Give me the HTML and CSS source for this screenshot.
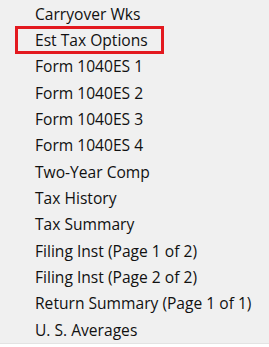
FILE: index.html
```html
<!DOCTYPE html>
<html lang="en">
<head>
    <meta charset="UTF-8">
    <title>Forms Menu</title>
    <link rel="stylesheet" href="styles.css">
</head>
<body>
    <ul class="menu">
        <li class="menu-item">Carryover Wks</li>
        <li class="menu-item selected">Est Tax Options</li>
        <li class="menu-item">Form 1040ES 1</li>
        <li class="menu-item">Form 1040ES 2</li>
        <li class="menu-item">Form 1040ES 3</li>
        <li class="menu-item">Form 1040ES 4</li>
        <li class="menu-item">Two-Year Comp</li>
        <li class="menu-item">Tax History</li>
        <li class="menu-item">Tax Summary</li>
        <li class="menu-item">Filing Inst (Page 1 of 2)</li>
        <li class="menu-item">Filing Inst (Page 2 of 2)</li>
        <li class="menu-item">Return Summary (Page 1 of 1)</li>
        <li class="menu-item">U. S. Averages</li>
    </ul>
</body>
</html>
```

FILE: styles.css
```css
body, html {
    margin: 0;
    padding: 0;
    height: 100%;
    background: #fff;
    font-family: "Open Sans", "Noto Sans", sans-serif;
    overflow: hidden;
}
.menu {
    list-style: none;
    margin: 0;
    padding: 1px 0 0 15px;
    height: 344px;
    box-sizing: border-box;
    background: #f0f0f0;
    border-bottom: 1px solid #e3e3e3;
}
.menu-item {
    width: 149px;
    height: 26.33px;
    box-sizing: border-box;
    padding-left: 20px;
    font-size: 15.6px;
    line-height: 26px;
    color: #111;
    white-space: nowrap;
}
.menu-item.selected {
    border: 3px solid #e3191f;
    padding-left: 17px;
    line-height: 22px;
    height: 28px;
    margin: -1px 0 -1px;
}
```
